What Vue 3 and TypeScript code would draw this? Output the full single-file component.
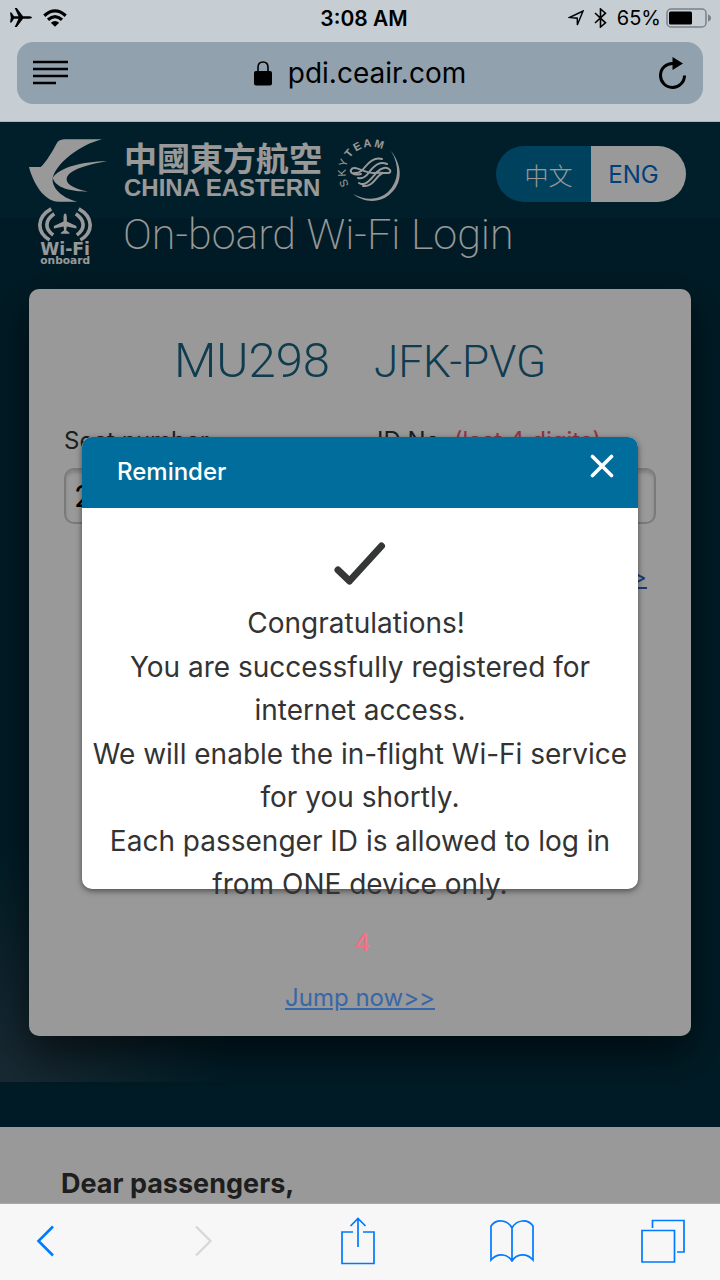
<script setup lang="ts">
import { ref } from 'vue'

const seat = ref('2')
const idDigits = ref('')
const countdown = ref(4)
const messages: string[] = [
  'Congratulations!\u00a0',
  'You are successfully registered for internet access.',
  'We will enable the in-flight Wi-Fi service for you shortly.',
  'Each passenger ID is allowed to log in from ONE device only.',
]
</script>

<template>
  <div class="screen">
    <header class="chrome">
      <div class="status">
        <div class="status-side">
          <svg width="22" height="20" viewBox="0 0 22 20" aria-label="Airplane mode">
            <path d="M0 4.500H1.500L4 8.200H8.500L4.700 0H6.800L13 8.200H19.500Q22 8.400 22 9.500Q22 10.600 19.500 10.800H13L6.800 19H4.700L8.500 10.800H4L1.500 14.500H0L.8 9.500Z" />
          </svg>
          <svg width="24" height="18" viewBox="0 0 24 18" aria-label="Wi-Fi">
            <g fill="none" stroke="#000" stroke-width="3.200">
              <path d="M1.300 6.700Q12-2.800 22.700 6.700" />
              <path d="M5 10.800Q12 4.600 19 10.800" />
            </g>
            <path d="M7.800 13.800Q12 10 16.200 13.800L12 17.700Z" />
          </svg>
        </div>
        <span class="time">3:08 AM</span>
        <div class="status-side right">
          <svg width="16" height="17" viewBox="0 0 16 17" aria-label="Location">
            <path d="M1.500 7.500L15 1L9.300 15V8.200Z" fill="none" stroke="#000" stroke-width="1.400" />
          </svg>
          <svg class="bluetooth" width="13" height="20" viewBox="0 0 13 20" aria-label="Bluetooth">
            <path d="M1 5L11.500 14.800L6.500 19V1L11.500 5.200L1 15" fill="none" stroke="#000" stroke-width="1.600" />
          </svg>
          <span class="percent">65%</span>
          <svg width="45" height="20" viewBox="0 0 45 20" aria-label="Battery">
            <rect x="1" y="1" width="39" height="18" rx="4" fill="none" stroke="#7b8388" stroke-width="1.500" />
            <rect x="3" y="3.500" width="23" height="13" rx="1.500" />
            <path d="M42 6.500Q45 7.500 45 10T42 13.500Z" fill="#7b8388" />
          </svg>
        </div>
      </div>
      <div class="address">
        <button class="plain tool" aria-label="Reader view">
          <svg width="36" height="26" viewBox="0 0 36 26">
            <path d="M0 2H35M0 9H35M0 16H35M0 23H23" stroke="#000" stroke-width="2.400" />
          </svg>
        </button>
        <span class="url">
          <svg width="18" height="25" viewBox="0 0 18 25">
            <path d="M4 11V6.500Q4 1 9 1T14 6.500V11" fill="none" stroke="#000" stroke-width="1.600" />
            <rect y="10" width="18" height="14.500" rx="2" />
          </svg>
          pdi.ceair.com
        </span>
        <button class="plain tool reload" aria-label="Reload">
          <svg width="28" height="32" viewBox="0 0 28 32">
            <path d="M25.500 18.500A12 12 0 1 1 14 6.500" fill="none" stroke="#000" stroke-width="3" />
            <path d="M13.500 0L24 6.500L13.500 13Z" />
          </svg>
        </button>
      </div>
    </header>

    <main class="page">
      <section class="hero">
        <div class="brand">
          <svg class="swallow" width="78" height="63" viewBox="27 27 234 189" role="img" aria-label="China Eastern">
            <path d="M27 111H62C78 98 101 58 109 42Q115 29 132 28L246 28C179 45 110 98 98 144C95 178 132 206 172 215H116C70 214 39 157 27 111Z" />
            <path d="M98 144C117 113 188 94 261 94C193 105 140 123 140 149C140 166 174 178 204 185C150 184 108 174 98 144Z" />
          </svg>
          <div class="names">
            <span class="name-cn">中國東方航空</span>
            <span class="name-en">CHINA EASTERN</span>
          </div>
          <svg class="skyteam" width="66" height="66" viewBox="0 0 66 66" role="img" aria-label="SkyTeam">
            <defs><path id="ring" d="M12 47A25.500 25.500 0 1 1 58 43" /></defs>
            <text x="0 9 18 28 37 46 56" font-family="Liberation Sans, Arial, sans-serif" font-size="11">
              <textPath href="#ring">SKY<tspan font-weight="bold">TEAM</tspan></textPath>
            </text>
            <path d="M54 13C66 28 66 46 52 57C41 66 26 64 16 56C29 63 42 62 51 54C62 43 63 28 54 13Z" />
            <g fill="none" stroke="#fff" stroke-width="2" stroke-linecap="round">
              <path d="M24 36C16 38 13 34 14 32C17 26 28 36 38 35C48 34 55 37 53 32C50 28 44 30 40 34C33 42 28 49 22 45" />
              <path d="M45 21C38 19 32 24 28 29Q23 36 17 35" />
              <path d="M50 26C43 23 38 27 33 33Q27 42 21 40" />
              <path d="M46 35C38 38 37 49 26 48" />
            </g>
          </svg>
          <div class="languages">
            <button class="lang active">中文</button>
            <button class="lang">ENG</button>
          </div>
        </div>
        <div class="title-row">
          <svg class="onboard" width="54" height="58" viewBox="54 230 163 174" role="img" aria-label="Wi-Fi onboard">
            <g fill="none" stroke="#fff" stroke-width="11">
              <path d="M94 235C49 260 49 306 89 329" />
              <path d="M177 235C222 260 222 306 182 329" />
              <path d="M103 250C74 270 74 296 100 314" />
              <path d="M168 250C197 270 197 296 171 314" />
            </g>
            <path d="M136 248Q141 250 141 260V273L170 287V294L141 288L139 300L149 307V310H123V307L133 300L131 288L102 294V287L131 273V260Q131 250 136 248Z" />
            <text x="136" y="375" text-anchor="middle" font-family="DejaVu Sans, Verdana, sans-serif" font-weight="bold" font-size="52">Wi-Fi</text>
            <text x="136" y="401" text-anchor="middle" font-family="DejaVu Sans, Verdana, sans-serif" font-weight="bold" font-size="32">onboard</text>
          </svg>
          <h1>On-board Wi-Fi Login</h1>
        </div>

        <div class="card">
          <div class="flight">
            <span class="number">MU298</span>
            <span class="route">JFK-PVG</span>
          </div>
          <form class="fields" @submit.prevent>
            <div class="field">
              <label for="seat">Seat number</label>
              <input id="seat" v-model="seat" type="text" />
            </div>
            <div class="field">
              <label for="digits">ID No. <em>(last 4 digits)</em></label>
              <input id="digits" v-model="idDigits" type="text" />
            </div>
          </form>
          <a class="more" href="#">&gt;&gt;</a>
        </div>
      </section>

      <section class="notice">
        <h2>Dear passengers,</h2>
      </section>

      <div class="overlay">
        <div class="dialog" role="dialog" aria-labelledby="dialog-title">
          <div class="dialog-head">
            <span id="dialog-title">Reminder</span>
            <button class="plain close" aria-label="Close">
              <svg width="24" height="24" viewBox="0 0 24 24">
                <path d="M2.500 2.500L21.500 21.500M21.500 2.500L2.500 21.500" stroke="#fff" stroke-width="3.600" stroke-linecap="round" />
              </svg>
            </button>
          </div>
          <div class="dialog-body">
            <svg class="tick" width="52" height="44" viewBox="0 0 52 44">
              <path d="M4 28L15.500 39L47.500 4" fill="none" stroke="#353736" stroke-width="7" stroke-linecap="round" stroke-linejoin="round" />
            </svg>
            <p v-for="line in messages" :key="line">{{ line }}</p>
            <strong class="count">{{ countdown }}</strong>
            <a class="jump" href="#">Jump now&gt;&gt;</a>
          </div>
        </div>
      </div>
    </main>

    <nav class="toolbar">
      <button class="plain back" aria-label="Back">
        <svg width="18" height="32" viewBox="0 0 18 32"><path d="M17 1.500L2.500 16L17 30.500" stroke="#007aff" stroke-width="2.600" fill="none" /></svg>
      </button>
      <button class="plain" aria-label="Forward" disabled>
        <svg width="18" height="32" viewBox="0 0 18 32"><path d="M1 1.500L15.500 16L1 30.500" stroke="#d8d8d8" stroke-width="2.400" fill="none" /></svg>
      </button>
      <button class="plain" aria-label="Share">
        <svg width="34" height="48" viewBox="0 0 34 48"><path d="M12 15H1V46.500H33V15H22M17 30V1.500M9.500 9L17 1.500L24.500 9" stroke="#007aff" stroke-width="1.700" fill="none" /></svg>
      </button>
      <button class="plain" aria-label="Bookmarks">
        <svg width="44" height="42" viewBox="0 0 44 42"><path d="M22 8C17-1 6-1 1 6V40C7 33 17 33 22 41C27 33 37 33 43 40V6C38-1 27-1 22 8V41" stroke="#007aff" stroke-width="1.700" fill="none" /></svg>
      </button>
      <button class="plain tabs" aria-label="Tabs">
        <svg width="44" height="44" viewBox="0 0 44 44"><path d="M1 11.500H33.500V43H1ZM11.500 9V1.500H43V33H36" stroke="#007aff" stroke-width="1.700" fill="none" /></svg>
      </button>
    </nav>
  </div>
</template>

<style>
body {
  margin: 0;
}
</style>

<style scoped>
.screen {
  display: flex;
  flex-direction: column;
  height: 100vh;
  font-family: Inter, "Noto Sans CJK TC", sans-serif;
  color: #333;
}
svg {
  display: block;
  flex: none;
}
.plain {
  padding: 0;
  border: 0;
  background: none;
}
.chrome {
  box-sizing: border-box;
  flex: none;
  padding: 0 17px 17px;
  border-bottom: 1px solid #a9b4bb;
  background: #c6ced4;
  color: #000;
}
.status {
  display: flex;
  align-items: center;
  height: 36px;
  margin: 0 -8px 6px -7px;
}
.status-side {
  display: flex;
  flex: 1;
  align-items: center;
  gap: 11px;
}
.right {
  justify-content: flex-end;
  gap: 5px;
}
.bluetooth {
  margin: 0 5px;
}
.time {
  font-size: 21px;
  font-weight: 600;
  margin-left: 7px;
}
.percent {
  font-size: 20px;
}
.address {
  display: flex;
  align-items: center;
  justify-content: space-between;
  padding: 0 16px;
  height: 62px;
  border-radius: 16px;
  background: #91a2ae;
}
.tool {
  display: flex;
  width: 36px;
}
.reload {
  justify-content: flex-end;
}
.url {
  display: flex;
  align-items: center;
  gap: 16px;
  font-size: 28px;
}
.page {
  position: relative;
  display: flex;
  flex: 1;
  flex-direction: column;
  min-height: 0;
  overflow: hidden;
  background: #002e3f;
}
.hero {
  display: flex;
  flex: 1;
  flex-direction: column;
  padding: 17px 29px 46px;
  background:
    radial-gradient(230px 240px at 0 100%, #2b4554, transparent),
    linear-gradient(#003447 96px, #002e3f 96px);
}
.brand {
  display: flex;
  align-items: center;
  height: 63px;
}
.swallow,
.skyteam,
.onboard {
  fill: #fff;
}
.names {
  display: flex;
  flex-direction: column;
  margin-left: 17px;
  color: #fff;
  white-space: nowrap;
}
.name-cn {
  font: bold 33px/34px "Noto Sans CJK TC", sans-serif;
}
.name-en {
  font: bold 24px/27px "Liberation Sans", Arial, sans-serif;
}
.skyteam {
  margin-left: 15px;
  overflow: visible;
}
.languages {
  display: flex;
  width: 190px;
  height: 56px;
  margin: 7px 5px 0 auto;
  overflow: hidden;
  border-radius: 28px;
}
.lang {
  flex: 1;
  padding: 0 10px 0 0;
  border: 0;
  background: #fff;
  color: #006dcc;
  font: 24px Inter, "Noto Sans CJK SC", sans-serif;
}
.lang.active {
  padding: 0 0 0 10px;
  background: #006d9c;
  color: #fff;
  font-weight: 300;
}
.title-row {
  display: flex;
  align-items: center;
  gap: 31px;
  height: 58px;
  padding: 5px 0 0 9px;
}
h1 {
  margin: 0;
  padding-bottom: 4px;
  color: #fff;
  font-family: Roboto, sans-serif;
  font-size: 43px;
  font-weight: 200;
  line-height: 48px;
  white-space: nowrap;
}
.card {
  flex: 1;
  margin-top: 24px;
  padding: 40px 35px 0;
  border-radius: 10px;
  background: #fff;
  box-shadow: 0 16px 40px rgba(0, 0, 0, 0.6);
}
.flight {
  display: flex;
  align-items: baseline;
  justify-content: center;
  gap: 44px;
  color: #1a6484;
  font-family: Roboto, sans-serif;
  font-weight: 300;
  line-height: 64px;
}
.number {
  font-size: 49px;
}
.route {
  font-size: 44px;
}
.fields {
  display: grid;
  grid-template-columns: 1fr 1fr;
  gap: 34px;
  margin-top: 31px;
}
.field {
  display: flex;
  flex-direction: column;
  gap: 11px;
}
.field label {
  font-size: 24px;
  line-height: 32px;
}
.field em {
  color: #f5576f;
  font-style: normal;
}
.field input {
  box-sizing: border-box;
  width: 100%;
  height: 56px;
  padding: 0 8px;
  border: 2px solid #ccc;
  border-radius: 10px;
  box-shadow: inset 0 3px 3px rgba(0, 0, 0, 0.15);
  background: #fff;
  font: 30px Inter, sans-serif;
}
.more {
  display: block;
  margin: 37px 9px 0;
  color: #2a62bc;
  font-size: 24px;
  line-height: 32px;
  text-align: right;
}
.notice {
  flex: none;
  margin-top: 45px;
  padding: 38px 61px 0;
  background: #fff;
}
h2 {
  margin: 0;
  font-size: 27px;
  font-weight: 700;
  line-height: 38px;
}
.overlay {
  position: absolute;
  inset: 0;
  display: flex;
  align-items: center;
  justify-content: center;
  padding: 0 82px;
  background: rgba(0, 0, 0, 0.4);
}
.dialog {
  flex: 1;
  height: 452px;
  border-radius: 10px;
  background: #fff;
  box-shadow: 0 2px 6px rgba(0, 0, 0, 0.5);
}
.dialog-head {
  display: flex;
  align-items: flex-start;
  justify-content: space-between;
  box-sizing: border-box;
  height: 71px;
  padding: 17px 24px 0 35px;
  border-radius: 10px 10px 0 0;
  background: #006d9c;
  color: #fff;
  font-size: 24px;
  font-weight: 500;
  line-height: 36px;
}
.dialog-body {
  display: flex;
  flex-direction: column;
  align-items: center;
  gap: 1px;
  padding: 34px 6px 0;
}
.tick {
  margin-bottom: 15px;
}
p {
  margin: 0;
  font-size: 28px;
  line-height: 43px;
  text-align: center;
}
.count {
  margin-top: 18px;
  padding-left: 5px;
  color: #ff6b81;
  font-size: 24px;
  font-weight: 400;
  line-height: 36px;
}
.jump {
  margin-top: 18px;
  color: #3867a8;
  font-size: 24px;
  line-height: 36px;
}
.toolbar {
  display: flex;
  flex: none;
  align-items: center;
  justify-content: space-between;
  box-sizing: border-box;
  height: 77px;
  padding: 0 28px 2px 24px;
  border-top: 1px solid #aaa;
  background: #f7f7f7;
}
.toolbar button {
  display: flex;
  box-sizing: border-box;
  justify-content: center;
  width: 52px;
}
.toolbar .back {
  padding-right: 10px;
}
.toolbar .tabs {
  padding-right: 6px;
}
</style>
